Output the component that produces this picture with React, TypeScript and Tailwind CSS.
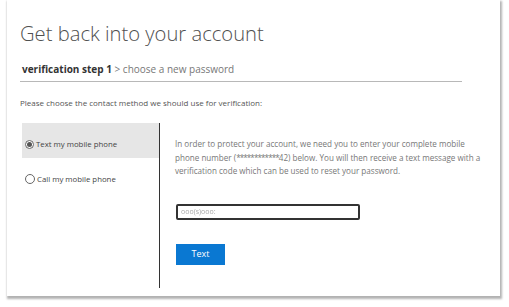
import React from "react";

export default function App() {
  const font = { fontFamily: '"Open Sans", "Noto Sans", sans-serif' };
  return (
    <div className="w-[509px] h-[307px] bg-white overflow-hidden" style={font}>
      <div className="ml-[7px] w-[493px] h-[296px] bg-white shadow-[1px_2px_2px_1px_rgba(0,0,0,0.3)] flex flex-col pl-[13px]">
        <div className="pt-[19px] text-[20.2px] leading-[28px] font-light text-[#505050]">
          Get back into your account
        </div>
        <div className="mt-[15px] w-[442px] border-b border-[#b8b8b8] pb-[5px] pl-[2px] text-[10px] leading-[14px]">
          <span className="font-bold text-[#333]">verification step 1</span>
          <span className="text-[#777]"> &gt; choose a new password</span>
        </div>
        <div className="mt-[15px] text-[8px] leading-[12px] text-[#555]">
          Please choose the contact method we should use for verification:
        </div>
        <div className="mt-[14px] flex">
          <div className="ml-[2px] w-[137px] flex flex-col">
            <div className="h-[35px] bg-[#e6e6e6] flex items-start pt-[15px] pl-[3px] gap-[2px] text-[7.8px] leading-[12px] text-[#444]">
              <span className="mt-[1.5px] w-[9px] h-[9px] rounded-full border border-[#666] flex items-center justify-center bg-white">
                <span className="w-[5px] h-[5px] rounded-full bg-[#555]" />
              </span>
              <span>Text my mobile phone</span>
            </div>
            <div className="pt-[15px] pl-[3px] flex items-start gap-[2px] text-[7.8px] leading-[12px] text-[#444]">
              <span className="mt-[1px] w-[10px] h-[10px] rounded-full border border-[#666] bg-white" />
              <span>Call my mobile phone</span>
            </div>
          </div>
          <div className="w-px h-[165px] bg-[#333]" />
          <div className="pl-[15px] pt-[14px] flex flex-col">
            <p className="w-[312px] whitespace-nowrap text-[8.1px] leading-[13.5px] text-[#777]">
              In order to protect your account, we need you to enter your complete mobile
              <br />
              phone number (<span className="tracking-[-0.9px]">************</span>42) below. You will then receive a text message with a
              <br />
              verification code which can be used to reset your password.
            </p>
            <div className="mt-[26px] ml-px w-[184px] h-[16px] border-2 border-[#333] rounded-[2px] flex items-center px-[3px]">
              <span className="text-[7px] leading-[10px] text-[#aaa] blur-[0.7px]">ooo(s)ooo:</span>
            </div>
            <div className="mt-[24px] ml-px w-[49px] h-[21px] bg-[#0a78d2] flex items-center justify-center text-white text-[9px]">
              Text
            </div>
          </div>
        </div>
      </div>
    </div>
  );
}
